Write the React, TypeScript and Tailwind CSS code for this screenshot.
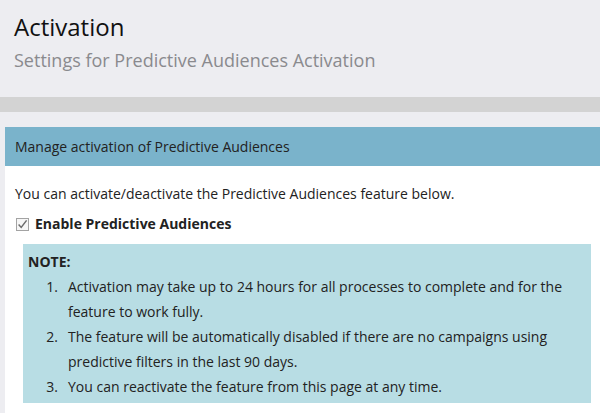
import React from "react";

function Check() {
  return (
    <svg width="13" height="13" viewBox="0 0 13 13" className="shrink-0">
      <rect x="0.5" y="0.5" width="12" height="12" fill="#f6f6f6" stroke="#a3a3a3" />
      <path d="M2.6 6.6 L5.2 9.4 L10.6 2.4" fill="none" stroke="#6b6b6b" strokeWidth="1.5" />
    </svg>
  );
}

const items = [
  "Activation may take up to 24 hours for all processes to complete and for the feature to work fully.",
  "The feature will be automatically disabled if there are no campaigns using predictive filters in the last 90 days.",
  "You can reactivate the feature from this page at any time.",
];

export default function App() {
  return (
    <div className="w-[600px] h-[413px] overflow-hidden bg-[#ededf1] flex flex-col font-['Open_Sans',sans-serif]">
      <div className="pl-[14px] pt-[9px] h-[97px] shrink-0">
        <div className="text-[24px] leading-[36px] text-[#111]">Activation</div>
        <div className="text-[18px] leading-[26px] mt-[2px] text-[#8a8a8e]">Settings for Predictive Audiences Activation</div>
      </div>
      <div className="h-[15px] bg-[#d3d3d3] shrink-0" />
      <div className="h-[15px] shrink-0" />
      <div className="ml-[5px] bg-white flex-1">
        <div className="h-[39px] bg-[#7ab3cb] flex items-center pl-[10px] text-[14px] text-[#222]">
          Manage activation of Predictive Audiences
        </div>
        <div className="pl-[10px] pt-[17px] text-[14px] text-[#222]">
          <div className="leading-[22px]">You can activate/deactivate the Predictive Audiences feature below.</div>
          <div className="flex items-center gap-[6px] mt-[8px] ml-[1px] font-bold leading-[22px]">
            <Check />
            <span>Enable Predictive Audiences</span>
          </div>
          <div className="mt-[9px] ml-[8px] mr-[9px] bg-[#b8dde4] pl-[5px] pr-[4px] pt-[5px] pb-[4px] leading-[25px]">
            <div className="font-bold">NOTE:</div>
            <ol>
              {items.map((t, i) => (
                <li key={i} className="flex">
                  <span className="w-[30px] text-right shrink-0">{i + 1}.</span>
                  <span className="ml-[10px]">{t}</span>
                </li>
              ))}
            </ol>
          </div>
        </div>
      </div>
    </div>
  );
}
